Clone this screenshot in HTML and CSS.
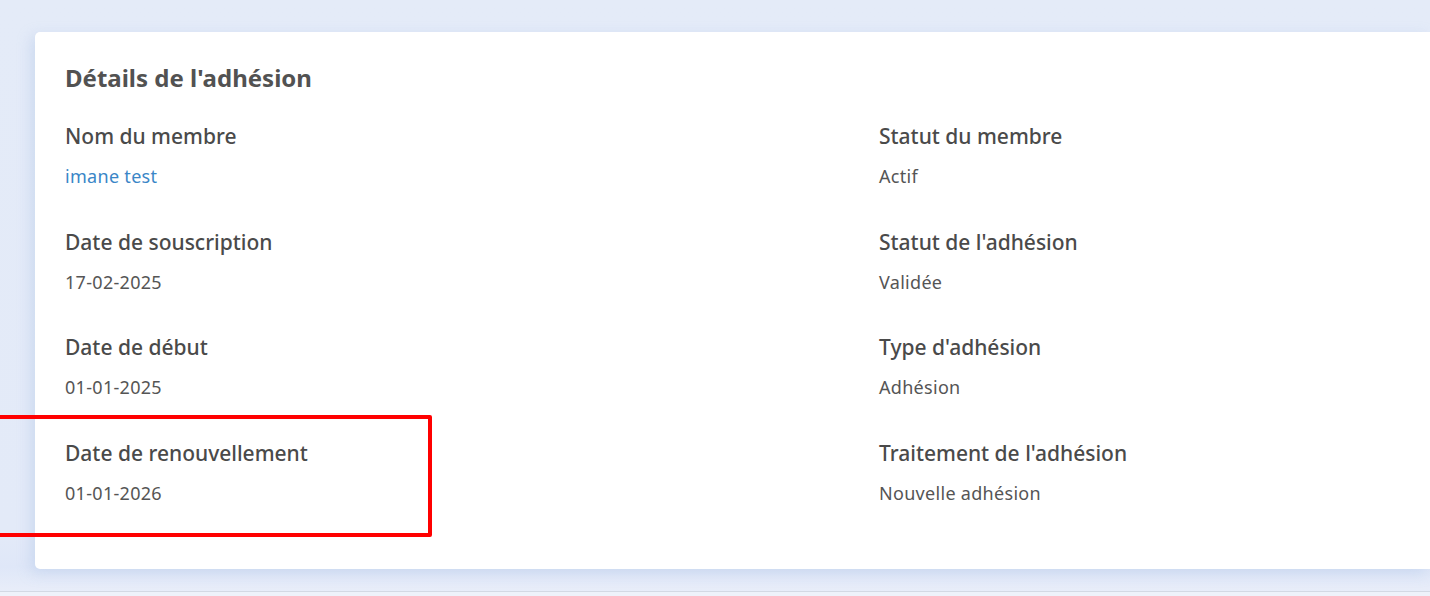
FILE: index.html
```html
<!DOCTYPE html>
<html lang="fr">
<head>
<meta charset="utf-8">
<link rel="stylesheet" href="styles.css">
</head>
<body>
<div class="page">
  <main class="content">
    <section class="card">
      <h2 class="card-title">Détails de l'adhésion</h2>
      <div class="grid">
        <div class="field"><div class="label">Nom du membre</div><a class="value link" href="#">imane test</a></div>
        <div class="field"><div class="label">Statut du membre</div><div class="value">Actif</div></div>
        <div class="field"><div class="label">Date de souscription</div><div class="value">17-02-2025</div></div>
        <div class="field"><div class="label">Statut de l'adhésion</div><div class="value">Validée</div></div>
        <div class="field"><div class="label">Date de début</div><div class="value">01-01-2025</div></div>
        <div class="field"><div class="label">Type d'adhésion</div><div class="value">Adhésion</div></div>
        <div class="field"><div class="label">Date de renouvellement</div><div class="value">01-01-2026</div></div>
        <div class="field"><div class="label">Traitement de l'adhésion</div><div class="value">Nouvelle adhésion</div></div>
      </div>
    </section>
  </main>
  <footer class="footer"></footer>
  <div class="highlight"></div>
</div>
</body>
</html>
```
FILE: styles.css
```css
html, body {
  margin: 0;
  padding: 0;
}
body {
  background: #e5ecf8;
  font-family: "Noto Sans", "Open Sans", sans-serif;
  color: #505050;
  overflow: hidden;
}
.page {
  position: relative;
  height: 596px;
  display: flex;
  flex-direction: column;
}
.content {
  padding: 32px 0 0 35px;
  height: 591px;
  box-sizing: border-box;
  background: linear-gradient(#e4ebf8, #e3eaf8 90%, #dfe7f8 96%, #e8edf9);
}
.card {
  background: #fff;
  border-radius: 5px 0 0 5px;
  height: 537px;
  box-sizing: border-box;
  padding: 64px 0 0 30px;
  box-shadow: -4px 4px 14px rgba(160, 185, 225, 0.35);
}
.card-title {
  margin: -32px 0 32px;
  font-size: 24px;
  line-height: 28px;
  font-weight: 700;
  color: #525252;
}
.grid {
  display: grid;
  grid-template-columns: 814px 1fr;
  row-gap: 41.5px;
}
.field {
  display: flex;
  flex-direction: column;
  gap: 16px;
}
.label {
  font-size: 21px;
  line-height: 24px;
  font-weight: 500;
  color: #4a4a4a;
}
.value {
  font-size: 18px;
  line-height: 24px;
  letter-spacing: 0.3px;
  color: #555;
}
.link {
  color: #3a86c7;
  text-decoration: none;
}
.footer {
  flex: 1;
  border-top: 1px solid #d3d9e4;
  background: #eef2fa;
}
.highlight {
  position: absolute;
  left: -4px;
  top: 415px;
  width: 436px;
  height: 122px;
  box-sizing: border-box;
  border: 4px solid #ff0000;
  border-radius: 2px;
}
```
